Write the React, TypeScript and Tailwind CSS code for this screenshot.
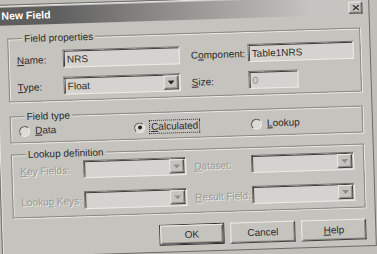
import React from "react";

const sunken =
  "border border-t-[#6c6a66] border-l-[#6c6a66] border-b-[#eceae6] border-r-[#eceae6] shadow-[inset_1px_1px_0_#3e3e3e]";
const raised =
  "border border-t-[#eeece8] border-l-[#eeece8] border-b-[#3e3e3e] border-r-[#3e3e3e] shadow-[inset_-1px_-1px_0_#8a8884]";
const group =
  "border border-[#8a8884] shadow-[inset_1px_1px_0_#eceae6,1px_1px_0_#eceae6]";
const legend = "ml-[6px] px-[2px] bg-[#c5c3be] text-[10px] leading-[13px]";
const disabledText = "whitespace-nowrap text-[#9b9995] [text-shadow:1px_1px_0_#eceae6]";

function Edit({ value, className = "" }: { value: string; className?: string }) {
  return (
    <div className={`${sunken} bg-[#d5d3cf] h-[18px] flex items-center pl-[3px] text-[10px] ${className}`}>
      {value}
    </div>
  );
}

function Combo({ value = "", disabled = false }: { value?: string; disabled?: boolean }) {
  return (
    <div className={`${sunken} bg-[#d5d3cf] h-[18px] flex items-stretch`}>
      <div className="flex-1 pl-[3px] flex items-center text-[10px]">{value}</div>
      <div className={`w-[15px] m-[1px] ${raised} bg-[#c5c3be] flex items-center justify-center`}>
        <svg width="7" height="4" viewBox="0 0 7 4">
          <path d="M0 0h7L3.5 4z" fill={disabled ? "#8e8c88" : "#222"} />
        </svg>
      </div>
    </div>
  );
}

function Radio({ checked = false, children, focus = false }: { checked?: boolean; children: React.ReactNode; focus?: boolean }) {
  return (
    <div className="flex items-center gap-[5px]">
      <div className="w-[11px] h-[11px] rounded-full bg-[#dcdad6] border border-t-[#5c5a56] border-l-[#5c5a56] border-b-[#eeece8] border-r-[#eeece8] flex items-center justify-center">
        {checked && <div className="w-[4px] h-[4px] rounded-full bg-[#222]" />}
      </div>
      <span className={focus ? "outline outline-1 outline-dotted outline-[#333] px-[1px] leading-[12px]" : "leading-[12px]"}>
        {children}
      </span>
    </div>
  );
}

function Button({ children, isDefault = false }: { children: React.ReactNode; isDefault?: boolean }) {
  return (
    <div className={`w-[65px] h-[21px] ${isDefault ? "border border-[#2a2a2a]" : ""}`}>
      <div className={`w-full h-full ${raised} bg-[#c5c3be] flex items-center justify-center text-[10px]`}>
        {children}
      </div>
    </div>
  );
}

export default function App() {
  return (
    <div className="w-[377px] h-[254px] overflow-hidden bg-[#c0beb9] font-['Liberation_Sans',Arial,sans-serif] text-[#2c2c2c] text-[10px]">
      <div className="ml-[-2px] mt-[-1px] w-[375px] h-[253px] rotate-[-1.8deg] bg-[#c5c3be] border border-[#6e6c68] shadow-[inset_1px_1px_0_#e8e6e2] p-[2px] flex flex-col">
        {/* Title bar */}
        <div className="h-[18px] shrink-0 flex items-center justify-between bg-linear-to-r from-[#5e5e5e] from-15% via-[#8e8c8a] via-45% to-[#c6c4c0] to-85% pl-[4px] pr-[4px]">
          <span className="text-white font-bold text-[10.5px]">New Field</span>
          <div className={`self-start mt-[5px] w-[14px] h-[12px] ${raised} bg-[#c5c3be] flex items-center justify-center`}>
            <svg width="7" height="6" viewBox="0 0 7 6">
              <path d="M0.5 0.5L6.5 5.5M6.5 0.5L0.5 5.5" stroke="#333" strokeWidth="1.2" />
            </svg>
          </div>
        </div>

        <div className="pl-[9px] pr-[7px] pt-[7px] flex flex-col">
          {/* Field properties */}
          <fieldset className={`${group} pl-[8px] pr-[4px] pt-[6px] pb-[5px]`}>
            <legend className={legend}>Field properties</legend>
            <div className="grid grid-cols-[46px_117px_11px_57px_106px] grid-rows-[18px_18px] gap-y-[9px] items-center whitespace-nowrap">
              <span>
                <span className="underline">N</span>ame:
              </span>
              <Edit value="NRS" />
              <span />
              <span>
                C<span className="underline">o</span>mponent:
              </span>
              <Edit value="Table1NRS" />
              <span>
                <span className="underline">T</span>ype:
              </span>
              <Combo value="Float" />
              <span />
              <span>
                <span className="underline">S</span>ize:
              </span>
              <Edit value="0" className="w-[50px] text-[#8e8c88]" />
            </div>
          </fieldset>

          {/* Field type */}
          <fieldset className={`${group} mt-[8px] pl-[8px] pr-[5px] pt-[2px] pb-[5px]`}>
            <legend className={legend}>Field type</legend>
            <div className="grid grid-cols-[115px_117px_auto] items-center whitespace-nowrap">
              <Radio>
                <span className="underline">D</span>ata
              </Radio>
              <Radio checked focus>
                <span className="underline">C</span>alculated
              </Radio>
              <Radio>
                <span className="underline">L</span>ookup
              </Radio>
            </div>
          </fieldset>

          {/* Lookup definition */}
          <fieldset className={`${group} mt-[5px] pl-[8px] pr-[6px] pt-[1px] pb-[6px]`}>
            <legend className={legend}>Lookup definition</legend>
            <div className="grid grid-cols-[63px_103px_8px_57px_103px] grid-rows-[18px_18px] gap-y-[13px] items-center">
              <span className={disabledText}>
                <span className="underline">K</span>ey Fields:
              </span>
              <Combo disabled />
              <span />
              <span className={disabledText}>
                <span className="underline">D</span>ataset:
              </span>
              <Combo disabled />
              <span className={disabledText}>
                Looku<span className="underline">p</span> Keys:
              </span>
              <Combo disabled />
              <span />
              <span className={disabledText}>
                <span className="underline">R</span>esult Field:
              </span>
              <Combo disabled />
            </div>
          </fieldset>

          {/* Buttons */}
          <div className="mt-[11px] flex justify-end gap-[6px]">
            <Button isDefault>OK</Button>
            <Button>Cancel</Button>
            <Button>
              <span className="underline">H</span>elp
            </Button>
          </div>
        </div>
      </div>
    </div>
  );
}
